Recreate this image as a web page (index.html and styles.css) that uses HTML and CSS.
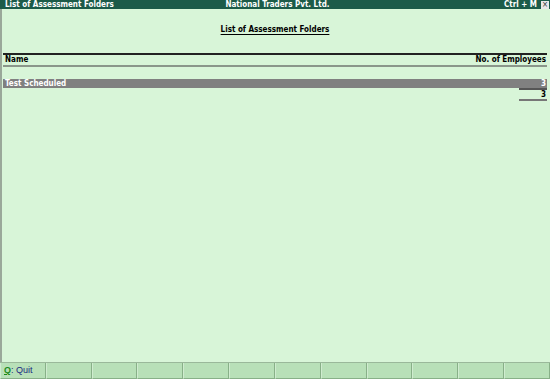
FILE: index.html
```html
<!DOCTYPE html>
<html>
<head>
<meta charset="utf-8">
<link rel="stylesheet" href="styles.css">
</head>
<body>
<div class="app">
  <div class="titlebar">
    <span class="tb-left">List of Assessment Folders</span>
    <span class="tb-center">National Traders Pvt. Ltd.</span>
    <span class="tb-right">Ctrl + M <span class="close">&#215;</span></span>
  </div>
  <div class="content">
    <div class="report-title">List of Assessment Folders</div>
    <div class="header-row">
      <span>Name</span>
      <span>No. of Employees</span>
    </div>
    <div class="data-row">
      <span>Test Scheduled</span>
      <span>3</span>
    </div>
    <div class="total-row">
      <span class="total">3</span>
    </div>
  </div>
  <div class="buttonbar">
    <div class="btn"><span class="key">Q</span>: Quit</div>
    <div class="btn"></div>
    <div class="btn"></div>
    <div class="btn"></div>
    <div class="btn"></div>
    <div class="btn"></div>
    <div class="btn"></div>
    <div class="btn"></div>
    <div class="btn"></div>
    <div class="btn"></div>
    <div class="btn"></div>
    <div class="btn"></div>
  </div>
</div>
</body>
</html>
```
FILE: styles.css
```css
html, body {
  margin: 0;
  padding: 0;
}
body {
  width: 550px;
  height: 379px;
  overflow: hidden;
  font-family: "DejaVu Sans Condensed", "DejaVu Sans", sans-serif;
}
.app {
  width: 550px;
  height: 379px;
  display: flex;
  flex-direction: column;
  background: #d8f5d8;
}
.titlebar {
  height: 9px;
  background: #1c5b49;
  color: #fff;
  font-weight: bold;
  font-size: 8px;
  line-height: 9px;
  display: grid;
  grid-template-columns: 1fr auto 1fr;
  padding-left: 5px;
}
.tb-center {
  text-align: center;
}
.tb-right {
  justify-self: end;
  display: flex;
  align-items: center;
  gap: 4px;
}
.close {
  width: 8px;
  height: 8px;
  background: #e8e8e8;
  color: #333;
  font-size: 8px;
  line-height: 8px;
  text-align: center;
  font-weight: normal;
  margin-right: 1px;
}
.content {
  flex: 1;
  border-left: 2px solid #9aa89a;
  padding: 16px 3px 0 1px;
  font-size: 8px;
  font-weight: bold;
  color: #000;
}
.report-title {
  text-align: center;
  text-decoration: underline;
  text-underline-offset: 2px;
  line-height: 9px;
  margin-bottom: 19px;
}
.header-row {
  display: flex;
  justify-content: space-between;
  border-top: 2px solid #222;
  border-bottom: 2px solid #8a968a;
  padding: 1px 1px 1px 2px;
  line-height: 8px;
}
.data-row {
  margin-top: 12px;
  display: flex;
  justify-content: space-between;
  background: #808080;
  color: #fff;
  padding: 0 1px 0 2px;
  line-height: 9px;
}
.total-row {
  display: flex;
  justify-content: flex-end;
}
.total {
  width: 27px;
  text-align: right;
  padding-right: 1px;
  border-top: 2px solid #555;
  border-bottom: 2px solid #777;
  line-height: 9px;
}
.buttonbar {
  height: 16px;
  display: grid;
  grid-template-columns: repeat(12, 1fr);
  background: #98c898;
  border-top: 1px solid #9ab89a;
}
.btn {
  background: #b8e0b8;
  border-left: 1px solid #d0ecd0;
  border-right: 1px solid #88b088;
  border-bottom: 1px solid #88b088;
  font-size: 9px;
  font-family: "Liberation Sans", sans-serif;
  color: #1a2a80;
  line-height: 14px;
  padding-left: 3px;
}
.key {
  color: #1a8a1a;
  text-decoration: underline;
  font-weight: bold;
}
```
